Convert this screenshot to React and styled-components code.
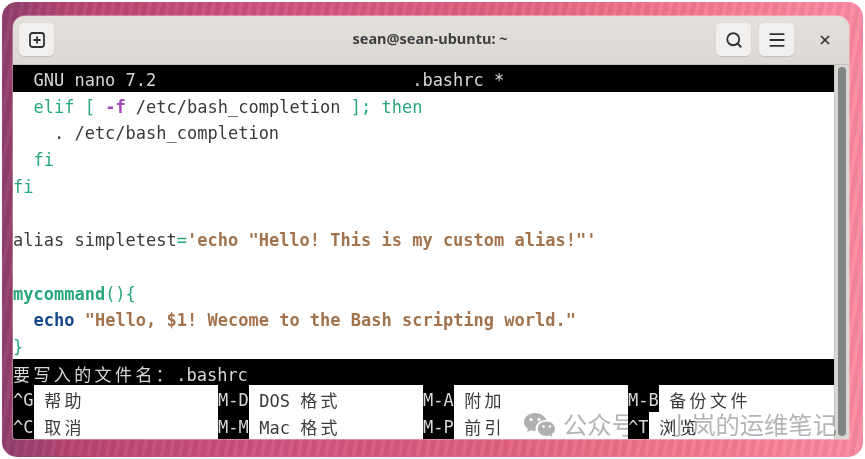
import React from 'react';
import styled, { createGlobalStyle } from 'styled-components';
import { Search, Menu, X } from 'lucide-react';

const ROW = 26.7;

const GlobalStyle = createGlobalStyle`
  html, body {
    margin: 0;
    background: #fff;
  }
`;

const Wallpaper = styled.div`
  position: relative;
  box-sizing: border-box;
  width: 861px;
  height: 455px;
  margin: 2px;
  padding: 14px 14px 18px 11px;
  border-radius: 15px;
  overflow: hidden;
  background:
    repeating-linear-gradient(100deg, rgba(255,255,255,0.04) 0 4px, rgba(60,0,40,0.05) 4px 9px),
    linear-gradient(90deg, #8f3e6e 0%, #b8466f 8%, #cf5280 30%, #e0607f 55%, #f4778c 78%, #fb8ba2 100%);
`;

const Frame = styled.div`
  display: flex;
  flex-direction: column;
  height: 100%;
  border-radius: 12px 12px 2px 2px;
  overflow: hidden;
  background: #dedad6;
  box-shadow: 0 0 0 1px rgba(255,255,255,0.3);
`;

const TitleBar = styled.header`
  display: grid;
  grid-template-columns: 1fr auto 1fr;
  align-items: center;
  flex: none;
  height: 49px;
  padding: 0 6px 1px;
  box-sizing: border-box;
  background: linear-gradient(#e3dfdb, #dcd8d4);
  border-bottom: 1px solid #c4c0bb;
`;

const Actions = styled.div`
  display: flex;
  align-items: center;
  justify-content: ${p => (p.$end ? 'flex-end' : 'flex-start')};
  gap: 8px;
`;

const Title = styled.h1`
  margin: 0 2px 3px 0;
  font: 700 14.5px "Noto Sans", "Open Sans", sans-serif;
  color: #3d3f40;
`;

const HeadButton = styled.button`
  display: flex;
  align-items: center;
  justify-content: center;
  width: 35px;
  height: 33px;
  padding: 0;
  border: none;
  border-radius: 5px;
  background: #f2f0ee;
  box-shadow: 0 1px 1px rgba(0,0,0,0.12);
  color: #2e3436;
`;

const CloseButton = styled.span`
  display: flex;
  align-items: center;
  justify-content: center;
  width: 25px;
  margin: 0 6px 0 10px;
  color: #2e3436;
`;

const Body = styled.div`
  display: flex;
  flex: 1;
  min-height: 0;
`;

const Terminal = styled.main`
  width: 821px;
  background: #fff;
  font: 17px/${ROW}px "DejaVu Sans Mono", monospace;
  color: #3a3a3a;
`;

const Line = styled.div`
  box-sizing: border-box;
  height: ${ROW}px;
  padding-top: 2px;
  white-space: pre;
  background: ${p => (p.$dark ? '#000' : 'transparent')};
  color: ${p => (p.$dark ? '#d8d8d8' : 'inherit')};
`;

const ShortcutRow = styled.div`
  display: flex;
  height: ${ROW}px;
  white-space: pre;
`;

const Token = styled.span`
  color: ${p => p.$color || 'inherit'};
  font-weight: ${p => (p.$bold ? 700 : 400)};
`;

const Cjk = styled.span`
  font-family: "Noto Sans CJK SC", sans-serif;
  letter-spacing: 3.4px;
`;

const Key = styled.span`
  flex: none;
  box-sizing: border-box;
  width: ${p => p.$w}px;
  padding-top: 2px;
  background: #000;
  color: #d8d8d8;
`;

const Label = styled.span`
  flex: none;
  box-sizing: border-box;
  width: ${p => p.$w}px;
  padding: 2px 0 0 10.2px;
  background: #fff;
  color: #3a3a3a;
`;

const ScrollTrack = styled.aside`
  flex: 1;
  display: flex;
  justify-content: center;
  padding: 2px 0 3px;
  box-sizing: border-box;
  background: #d8d6d3;
  border-left: 1px solid #c8c6c3;
`;

const ScrollThumb = styled.div`
  width: 8px;
  border-radius: 4px;
  background: #7f8484;
`;

const Watermark = styled.div`
  position: absolute;
  left: 521px;
  top: 407px;
  display: flex;
  align-items: center;
  color: #b4b4b4;
  font: 24.300px/30px "Noto Sans CJK SC", sans-serif;
  white-space: nowrap;
  mix-blend-mode: multiply;
`;

const WatermarkPart = styled.span`
  margin-left: ${p => p.$gap}px;
`;

const MarkSvg = styled.svg`
  margin-top: 2px;
`;

const GREEN = '#27a67c';
const BLUE = '#12488b';
const PURPLE = '#a347ba';
const BROWN = '#a2734c';

const WeChatMark = () => (
  <MarkSvg width="33" height="26" viewBox="0 0 33 26" fill="#b0b0b0">
    <path d="M12 1C5.8 1 1 5 1 10c0 2.900 1.600 5.300 4 7l-1 3.300 3.700-2c1.400.4 2.800.7 4.300.7h.9a8 8 0 0 1-.4-2.400c0-4.800 4.500-8.500 10-8.500h.9C22.300 4.300 17.600 1 12 1z" />
    <path d="M23.500 9.500c-4.900 0-8.800 3.200-8.800 7.200s3.900 7.200 8.800 7.200c1 0 2.100-.2 3-.5l2.900 1.600-.8-2.700c2-1.300 3.400-3.300 3.400-5.600 0-4-3.700-7.200-8.500-7.200z" />
    <circle cx="8" cy="7.500" r="1.500" fill="#fff" />
    <circle cx="16" cy="7.500" r="1.500" fill="#fff" />
    <circle cx="20.500" cy="14.500" r="1.200" fill="#fff" />
    <circle cx="27" cy="14.500" r="1.200" fill="#fff" />
  </MarkSvg>
);

const NewTabIcon = () => (
  <svg width="16" height="16" viewBox="0 0 16 16" fill="none" stroke="#2e3436" strokeWidth="1.8">
    <rect x="1" y="1" width="14" height="14" rx="2.500" />
    <path d="M8 4.500v7M4.500 8h7" />
  </svg>
);

const shortcuts = [
  [['^G', '帮助', 21, 184], ['M-D', 'DOS 格式', 31, 174], ['M-A', '附加', 31, 174], ['M-B', '备份文件', 31, 175]],
  [['^C', '取消', 21, 184], ['M-M', 'Mac 格式', 31, 174], ['M-P', '前引', 31, 174], ['^T', '浏览', 21, 185]],
];

function ShortcutLabel({ text }) {
  const parts = text.split(' ');
  if (parts.length > 1) {
    return <>{parts[0]} <Cjk>{parts[1]}</Cjk></>;
  }
  return <Cjk>{text}</Cjk>;
}

function App() {
  return (
    <>
      <GlobalStyle />
      <Wallpaper>
        <Frame>
          <TitleBar>
            <Actions><HeadButton><NewTabIcon /></HeadButton></Actions>
            <Title>sean@sean-ubuntu: ~</Title>
            <Actions $end>
              <HeadButton><Search size={18} strokeWidth={2.4} /></HeadButton>
              <HeadButton><Menu size={20} strokeWidth={2.2} /></HeadButton>
              <CloseButton><X size={14} strokeWidth={3} /></CloseButton>
            </Actions>
          </TitleBar>
          <Body>
            <Terminal>
              <Line $dark>{'  GNU nano 7.2                         .bashrc *'}</Line>
              <Line>{'  '}<Token $color={GREEN}>elif [ </Token><Token $color={PURPLE} $bold>-f</Token>{' /etc/bash_completion '}<Token $color={GREEN}>]; then</Token></Line>
              <Line>{'    . /etc/bash_completion'}</Line>
              <Line>{'  '}<Token $color={GREEN}>fi</Token></Line>
              <Line><Token $color={GREEN}>fi</Token></Line>
              <Line />
              <Line>{'alias simpletest'}<Token $color={GREEN}>=</Token><Token $color={BROWN} $bold>{`'echo "Hello! This is my custom alias!"'`}</Token></Line>
              <Line />
              <Line><Token $color={GREEN} $bold>mycommand</Token><Token $color={GREEN}>(){'{'}</Token></Line>
              <Line>{'  '}<Token $color={BLUE} $bold>echo</Token>{' '}<Token $color={BROWN} $bold>"Hello, $1! Wecome to the Bash scripting world."</Token></Line>
              <Line><Token $color={GREEN}>{'}'}</Token></Line>
              <Line $dark><Cjk>要写入的文件名：</Cjk>.bashrc</Line>
              {shortcuts.map((row, i) => (
                <ShortcutRow key={i}>
                  {row.map(([key, label, kw, lw]) => (
                    <React.Fragment key={key}>
                      <Key $w={kw}>{key}</Key>
                      <Label $w={lw}><ShortcutLabel text={label} /></Label>
                    </React.Fragment>
                  ))}
                </ShortcutRow>
              ))}
            </Terminal>
            <ScrollTrack><ScrollThumb /></ScrollTrack>
          </Body>
        </Frame>
        <Watermark>
          <WeChatMark />
          <WatermarkPart $gap={7}>公众号</WatermarkPart>
          <WatermarkPart $gap={31}>小岚的运维笔记</WatermarkPart>
        </Watermark>
      </Wallpaper>
    </>
  );
}

export default App;
